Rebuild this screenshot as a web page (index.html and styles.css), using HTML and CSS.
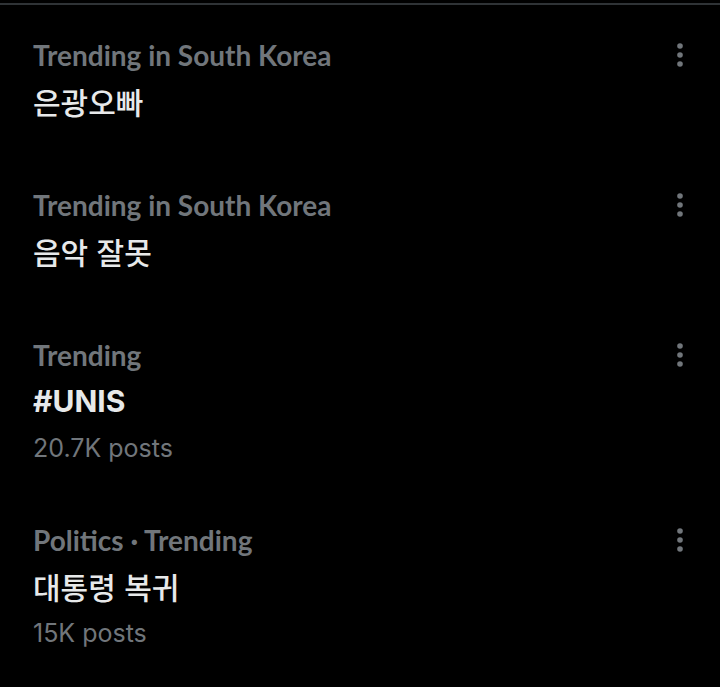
FILE: index.html
```html
<!DOCTYPE html>
<html lang="ko">
<head>
    <meta charset="UTF-8">
    <meta name="viewport" content="width=device-width, initial-scale=1.0">
    <title>Trends</title>
    <link rel="stylesheet" href="styles.css">
</head>
<body>
    <div class="trends">
        <div class="trend">
            <div class="trend-body">
                <p class="trend-meta">Trending in South Korea</p>
                <p class="trend-title">은광오빠</p>
            </div>
            <button class="more" aria-label="More">
                <svg viewBox="0 0 8 26" width="8" height="26"><circle cx="4" cy="4" r="2.8"/><circle cx="4" cy="13" r="2.8"/><circle cx="4" cy="22" r="2.8"/></svg>
            </button>
        </div>
        <div class="trend">
            <div class="trend-body">
                <p class="trend-meta">Trending in South Korea</p>
                <p class="trend-title">음악 잘못</p>
            </div>
            <button class="more" aria-label="More">
                <svg viewBox="0 0 8 26" width="8" height="26"><circle cx="4" cy="4" r="2.8"/><circle cx="4" cy="13" r="2.8"/><circle cx="4" cy="22" r="2.8"/></svg>
            </button>
        </div>
        <div class="trend">
            <div class="trend-body">
                <p class="trend-meta">Trending</p>
                <p class="trend-title latin">#UNIS</p>
                <p class="trend-count">20.7K posts</p>
            </div>
            <button class="more" aria-label="More">
                <svg viewBox="0 0 8 26" width="8" height="26"><circle cx="4" cy="4" r="2.8"/><circle cx="4" cy="13" r="2.8"/><circle cx="4" cy="22" r="2.8"/></svg>
            </button>
        </div>
        <div class="trend">
            <div class="trend-body">
                <p class="trend-meta">Politics · Trending</p>
                <p class="trend-title">대통령 복귀</p>
                <p class="trend-count">15K posts</p>
            </div>
            <button class="more" aria-label="More">
                <svg viewBox="0 0 8 26" width="8" height="26"><circle cx="4" cy="4" r="2.8"/><circle cx="4" cy="13" r="2.8"/><circle cx="4" cy="22" r="2.8"/></svg>
            </button>
        </div>
    </div>
</body>
</html>
```

FILE: styles.css
```css
body {
    margin: 0;
    padding-top: 3px;
    background: #000;
    font-family: 'Lato', 'Noto Sans CJK KR', sans-serif;
    color: #e7e9ea;
}
.trends {
    border-top: 2px solid #2f3336;
}
.trend {
    display: flex;
    justify-content: space-between;
    align-items: flex-start;
    padding: 27px 36px 30px 33px;
}
.trend p {
    margin: 0;
}
.trend-meta {
    font-size: 28px;
    font-weight: 700;
    line-height: 46px;
    color: #71767b;
}
.trend-title {
    font-family: 'Noto Sans CJK KR', sans-serif;
    font-size: 30px;
    font-weight: 500;
    line-height: 47px;
}
.trend-title.latin {
    font-family: 'Inter', sans-serif;
    font-weight: 700;
}
.trend-count {
    font-family: 'Inter', sans-serif;
    font-size: 25px;
    line-height: 23px;
    padding-top: 12px;
    color: #71767b;
}
.more {
    background: none;
    border: none;
    padding: 0;
    margin-top: 10px;
    fill: #71767b;
    display: flex;
}
```
